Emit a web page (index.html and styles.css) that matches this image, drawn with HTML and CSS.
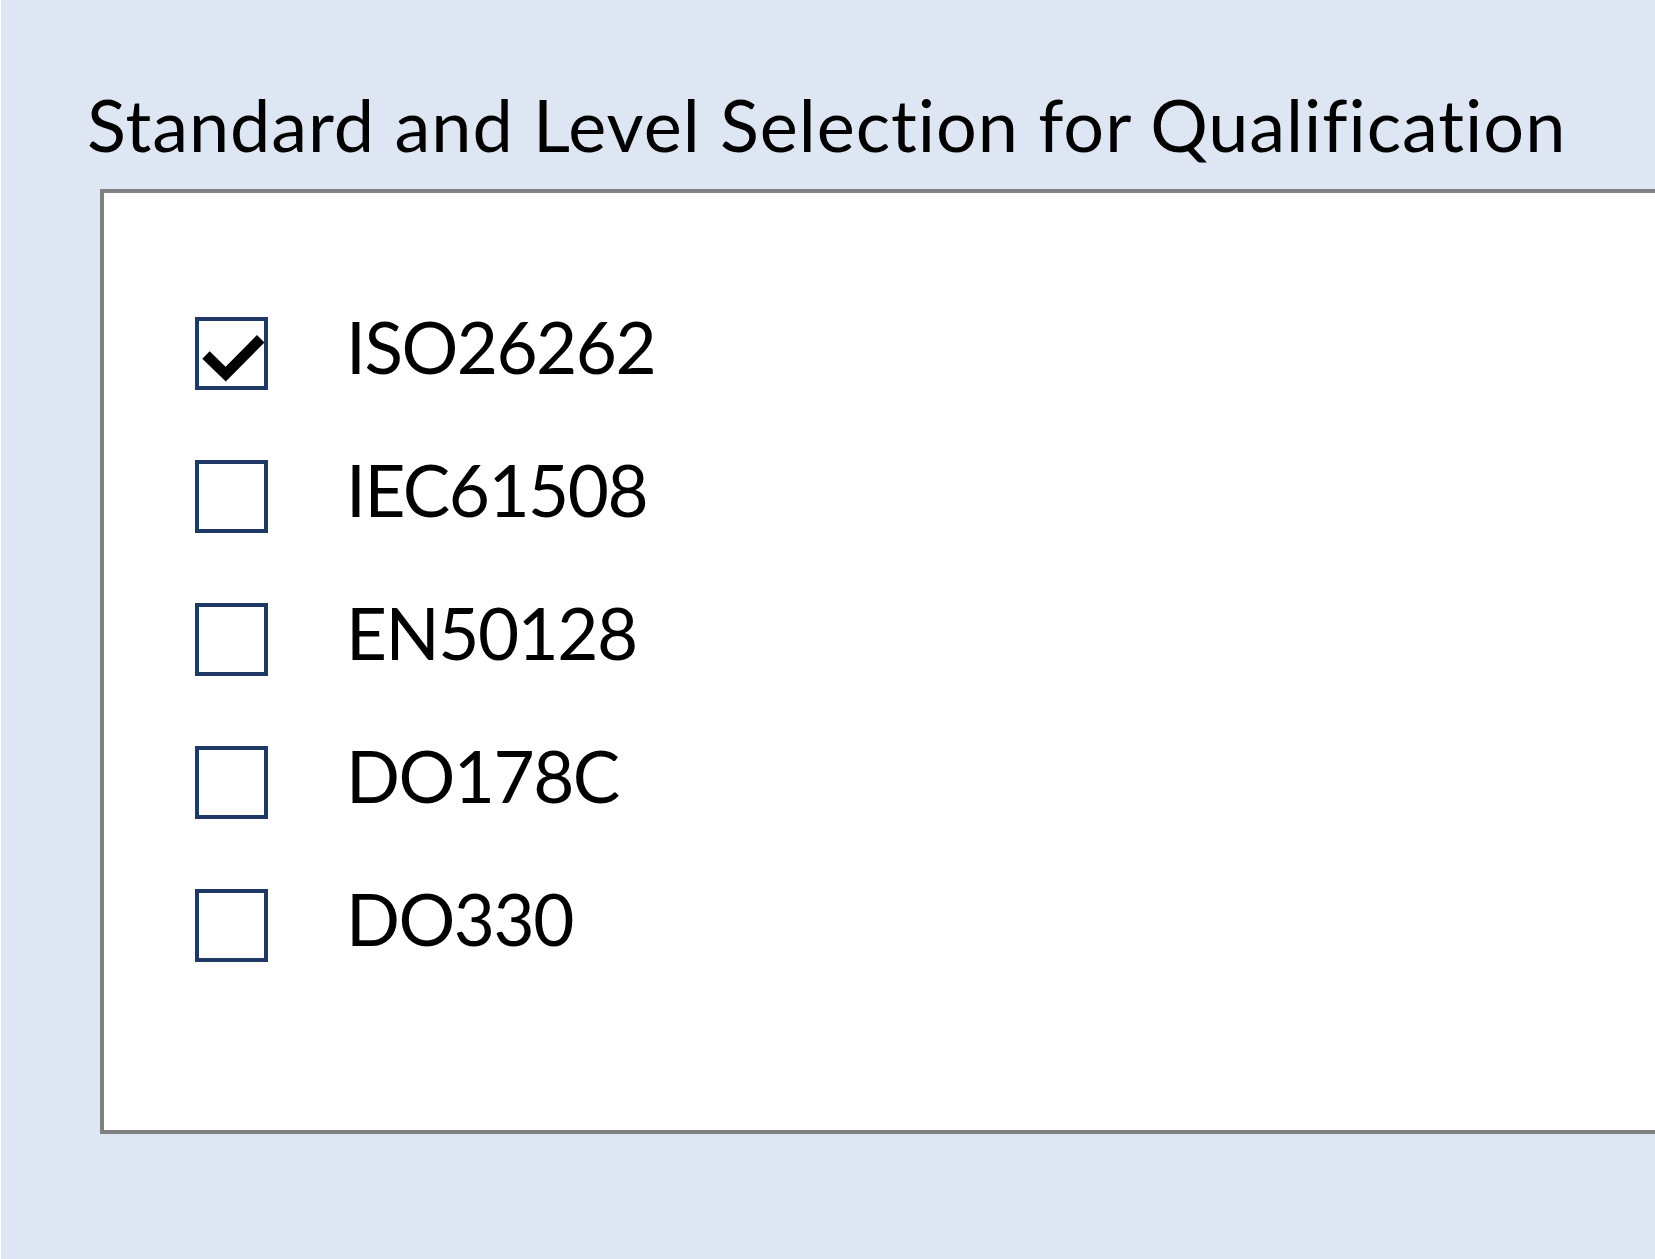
FILE: index.html
```html
<!DOCTYPE html>
<html lang="en">
<head>
<meta charset="utf-8">
<title>Standard and Level Selection for Qualification</title>
<link rel="stylesheet" href="styles.css">
</head>
<body>
<div class="page">
  <h1 class="title">Standard and Level Selection for Qualification</h1>
  <div class="panel">
    <ul class="options">
      <li class="option">
        <span class="box checked">
          <svg class="tick" width="73" height="73" viewBox="0 0 73 73" aria-hidden="true">
            <path d="M11 38 L30.7 57.2 L65.7 21.7" fill="none" stroke="#000" stroke-width="10.5" stroke-linejoin="miter" stroke-linecap="butt"/>
          </svg>
        </span>
        <span class="label">ISO26262</span>
      </li>
      <li class="option">
        <span class="box"></span>
        <span class="label">IEC61508</span>
      </li>
      <li class="option">
        <span class="box"></span>
        <span class="label">EN50128</span>
      </li>
      <li class="option">
        <span class="box"></span>
        <span class="label">DO178C</span>
      </li>
      <li class="option">
        <span class="box"></span>
        <span class="label">DO330</span>
      </li>
    </ul>
  </div>
</div>
</body>
</html>
```
FILE: styles.css
```css
html, body {
  margin: 0;
  padding: 0;
}
body {
  width: 1655px;
  height: 1259px;
  overflow: hidden;
  background: #dfe6f3;
  font-family: Lato, "Open Sans", "Liberation Sans", sans-serif;
  font-variant-ligatures: none;
  color: #000;
}
.page {
  height: 1259px;
  border-left: 1px solid #ffffff;
  box-sizing: border-box;
  padding-top: 88px;
}
.title {
  margin: 0 0 0 86px;
  font-size: 72px;
  font-weight: 400;
  line-height: 72px;
  height: 101px;
  letter-spacing: 0.96px;
  white-space: nowrap;
}
.panel {
  margin-left: 99px;
  height: 937px;
  background: #ffffff;
  border-top: 4px solid #808080;
  border-left: 4px solid #808080;
  border-bottom: 4px solid #808080;
  box-sizing: content-box;
}
.options {
  list-style: none;
  margin: 0;
  padding: 124px 0 0 91px;
  display: flex;
  flex-direction: column;
  gap: 70px;
}
.option {
  display: flex;
  align-items: flex-start;
  height: 73px;
}
.box {
  position: relative;
  width: 73px;
  height: 73px;
  box-sizing: border-box;
  border: 4px solid #1f3864;
  background: #ffffff;
  flex: none;
}
.tick {
  position: absolute;
  left: -4px;
  top: -4px;
  overflow: visible;
}
.label {
  margin-left: 78px;
  margin-top: -7px;
  font-size: 71px;
  line-height: 73px;
  letter-spacing: -1.5px;
  white-space: nowrap;
}
```
